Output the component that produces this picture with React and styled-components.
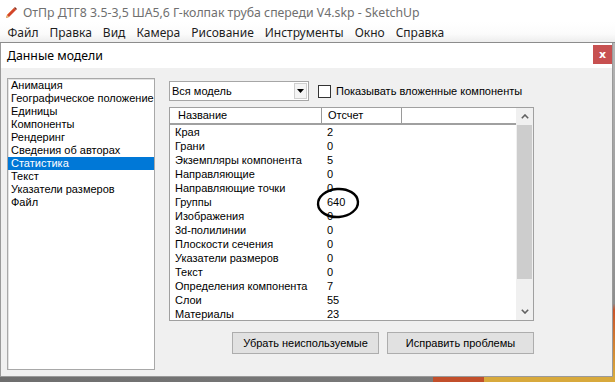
import React from 'react';
import styled, { createGlobalStyle } from 'styled-components';

const GlobalStyle = createGlobalStyle`
  html, body {
    margin: 0;
    padding: 0;
    width: 615px;
    height: 382px;
    overflow: hidden;
    background: #ffffff;
  }
  * { box-sizing: border-box; }
`;

const Page = styled.div`
  width: 615px;
  height: 382px;
  display: flex;
  flex-direction: column;
  overflow: hidden;
`;

const TitleBar = styled.div`
  height: 22px;
  display: flex;
  align-items: center;
  padding: 3px 0 0 4px;
  background: #ffffff;
  font-family: 'Noto Sans', sans-serif;
  font-size: 12.3px;
  color: #6f6f6f;
`;

const TitleText = styled.span`
  margin-left: 5px;
  white-space: nowrap;
`;

const MenuBar = styled.div`
  height: 21px;
  display: flex;
  align-items: center;
  padding: 1px 0 0 2px;
  background: linear-gradient(to bottom, #ffffff 0%, #fbfbfb 60%, #ededed 100%);
  border-bottom: 1px solid #8c8c8c;
  font-family: 'Noto Sans', sans-serif;
  font-size: 12px;
  color: #1e1e1e;
`;

const MenuItem = styled.span`
  padding: 0 5.5px;
  white-space: nowrap;
`;

const Workspace = styled.div`
  flex: 1;
  display: flex;
  min-height: 0;
`;

const Dialog = styled.div`
  width: 613px;
  display: flex;
  flex-direction: column;
  border: 1px solid #9a9a9a;
  border-top: none;
  background: #f0f0f0;
`;

const DialogHeader = styled.div`
  height: 25px;
  display: flex;
  align-items: flex-start;
  justify-content: space-between;
  background: #ffffff;
`;

const DialogTitle = styled.span`
  margin: 4px 0 0 6px;
  font-family: 'Noto Sans', sans-serif;
  font-size: 12.3px;
  color: #000;
`;

const CloseButton = styled.div`
  width: 19px;
  height: 19px;
  margin-top: 2px;
  background: #c75050;
  color: #fff;
  display: flex;
  align-items: center;
  justify-content: center;
  font-family: 'DejaVu Sans', sans-serif;
  font-weight: bold;
  font-size: 11px;
`;

const DialogBody = styled.div`
  flex: 1;
  display: flex;
  align-items: flex-start;
  gap: 14px;
  padding: 10px 0 0 6px;
  font-family: 'Liberation Sans', Arial, sans-serif;
  font-size: 11px;
  color: #000;
`;

const CategoryList = styled.div`
  width: 148px;
  height: 292px;
  background: #fff;
  border: 1px solid #a8a8a8;
  box-shadow: inset 1px 1px 0 #e3e3e3;
  display: flex;
  flex-direction: column;
`;

const CategoryItem = styled.div`
  height: 13px;
  line-height: 13px;
  padding-left: 3px;
  white-space: nowrap;
  background: ${({ selected }) => (selected ? '#0078d7' : 'transparent')};
  color: ${({ selected }) => (selected ? '#fff' : '#000')};
`;

const StatsPane = styled.div`
  width: 365px;
  display: flex;
  flex-direction: column;
  padding-top: 3px;
`;

const Toolbar = styled.div`
  display: flex;
  align-items: center;
  height: 20px;
  gap: 9px;
`;

const Combo = styled.div`
  width: 140px;
  height: 20px;
  display: flex;
  align-items: stretch;
  background: #fff;
  border: 1px solid #a6a6a6;
`;

const ComboValue = styled.span`
  flex: 1;
  padding-left: 2px;
  line-height: 18px;
`;

const ComboArrow = styled.span`
  width: 13px;
  margin: 1px;
  border: 1px solid #cfcfcf;
  background: #f4f4f4;
  display: flex;
  align-items: center;
  justify-content: center;
`;

const CheckLabel = styled.label`
  display: flex;
  align-items: center;
  gap: 5px;
  white-space: nowrap;
`;

const CheckBox = styled.span`
  width: 13px;
  height: 13px;
  background: #fff;
  border: 1px solid #333;
`;

const TableWrap = styled.div`
  position: relative;
  margin-top: 6px;
  width: 365px;
  height: 214px;
  background: #fff;
  border: 1px solid #a0a0a0;
  display: flex;
`;

const TableGrid = styled.div`
  flex: 1;
  display: flex;
  flex-direction: column;
`;

const HeaderRow = styled.div`
  height: 17px;
  display: grid;
  grid-template-columns: 152px 80px 1fr;
  border-bottom: 2px solid #a0a0a0;
`;

const HeaderCell = styled.div`
  padding-left: ${({ pad }) => pad}px;
  line-height: 15px;
  border-right: 1px solid #9a9a9a;
  border-left: 1px solid #fff;
  &:last-child { border-right: none; }
`;

const Row = styled.div`
  height: 14px;
  line-height: 14px;
  display: grid;
  grid-template-columns: 152px 80px 1fr;
  white-space: nowrap;
`;

const Cell = styled.span`
  padding-left: 5px;
`;

const Scrollbar = styled.div`
  width: 17px;
  background: #f0f0f0;
  display: flex;
  flex-direction: column;
  align-items: center;
`;

const ScrollBtn = styled.div`
  height: 17px;
  width: 17px;
  display: flex;
  align-items: center;
  justify-content: center;
`;

const ScrollTrack = styled.div`
  flex: 1;
  width: 15px;
  display: flex;
  flex-direction: column;
`;

const ScrollThumb = styled.div`
  height: 154px;
  background: #cdcdcd;
`;

const Annotation = styled.svg`
  position: absolute;
  left: 145px;
  top: 78px;
`;

const ButtonRow = styled.div`
  display: flex;
  gap: 8px;
  margin-top: 11px;
  padding-left: 63px;
`;

const Button = styled.div`
  width: 148px;
  height: 22px;
  display: flex;
  align-items: center;
  justify-content: center;
  background: #e1e1e1;
  border: 1px solid #adadad;
  white-space: nowrap;
`;

const SceneEdge = styled.div`
  width: 2px;
  background: linear-gradient(to bottom, #b5b5b5 0%, #8d8d8d 78%, #c9542a 80%, #d9ab3b 100%);
`;

const SceneStrip = styled.div`
  height: 5px;
  background: linear-gradient(to right, #6e6e6e 0, #7a7a7a 433px, #c24f2b 433px, #c24f2b 484px, #d8a93c 484px);
`;

const menus = ['Файл', 'Правка', 'Вид', 'Камера', 'Рисование', 'Инструменты', 'Окно', 'Справка'];

const categories = [
  'Анимация',
  'Географическое положение',
  'Единицы',
  'Компоненты',
  'Рендеринг',
  'Сведения об авторах',
  'Статистика',
  'Текст',
  'Указатели размеров',
  'Файл',
];

const stats = [
  ['Края', '2'],
  ['Грани', '0'],
  ['Экземпляры компонента', '5'],
  ['Направляющие', '0'],
  ['Направляющие точки', '0'],
  ['Группы', '640'],
  ['Изображения', '0'],
  ['3d-полилинии', '0'],
  ['Плоскости сечения', '0'],
  ['Указатели размеров', '0'],
  ['Текст', '0'],
  ['Определения компонента', '7'],
  ['Слои', '55'],
  ['Материалы', '23'],
];

const AppIcon = () => (
  <svg width="14" height="14" viewBox="0 0 14 14">
    <path d="M2 12 L3 9 L10 2 L12 4 L5 11 Z" fill="#d2452a" />
    <path d="M10 2 L11 1 L13 3 L12 4 Z" fill="#8a2a18" />
    <path d="M2 12 L3 9 L5 11 Z" fill="#e8c37a" />
    <path d="M3 9 L10 2" stroke="#f08a60" strokeWidth="1" />
  </svg>
);

export default function App() {
  return (
    <Page>
      <GlobalStyle />
      <TitleBar>
        <AppIcon />
        <TitleText>ОтПр ДТГ8 3.5-3,5 ША5,6 Г-колпак труба спереди V4.skp - SketchUp</TitleText>
      </TitleBar>
      <MenuBar>
        {menus.map((m) => (
          <MenuItem key={m}>{m}</MenuItem>
        ))}
      </MenuBar>
      <Workspace>
        <Dialog>
          <DialogHeader>
            <DialogTitle>Данные модели</DialogTitle>
            <CloseButton>x</CloseButton>
          </DialogHeader>
          <DialogBody>
            <CategoryList>
              {categories.map((c) => (
                <CategoryItem key={c} selected={c === 'Статистика'}>
                  {c}
                </CategoryItem>
              ))}
            </CategoryList>
            <StatsPane>
              <Toolbar>
                <Combo>
                  <ComboValue>Вся модель</ComboValue>
                  <ComboArrow>
                    <svg width="7" height="4" viewBox="0 0 7 4">
                      <path d="M0 0 H7 L3.5 4 Z" fill="#000" />
                    </svg>
                  </ComboArrow>
                </Combo>
                <CheckLabel>
                  <CheckBox />
                  Показывать вложенные компоненты
                </CheckLabel>
              </Toolbar>
              <TableWrap>
                <TableGrid>
                  <HeaderRow>
                    <HeaderCell pad={7}>Название</HeaderCell>
                    <HeaderCell pad={5}>Отсчет</HeaderCell>
                    <HeaderCell pad={5} />
                  </HeaderRow>
                  {stats.map(([name, value]) => (
                    <Row key={name}>
                      <Cell>{name}</Cell>
                      <Cell>{value}</Cell>
                      <span />
                    </Row>
                  ))}
                </TableGrid>
                <Scrollbar>
                  <ScrollBtn>
                    <svg width="8" height="5" viewBox="0 0 8 5">
                      <path d="M0.8 4.2 L4 1 L7.2 4.2" stroke="#606060" strokeWidth="1.6" fill="none" />
                    </svg>
                  </ScrollBtn>
                  <ScrollTrack>
                    <ScrollThumb />
                  </ScrollTrack>
                  <ScrollBtn>
                    <svg width="8" height="5" viewBox="0 0 8 5">
                      <path d="M0.8 0.8 L4 4 L7.2 0.8" stroke="#606060" strokeWidth="1.6" fill="none" />
                    </svg>
                  </ScrollBtn>
                </Scrollbar>
                <Annotation width="46" height="34" viewBox="0 0 46 34">
                  <ellipse cx="23" cy="17" rx="20" ry="14" fill="none" stroke="#000" strokeWidth="2.4" transform="rotate(-4 23 17)" />
                </Annotation>
              </TableWrap>
              <ButtonRow>
                <Button>Убрать неиспользуемые</Button>
                <Button>Исправить проблемы</Button>
              </ButtonRow>
            </StatsPane>
          </DialogBody>
        </Dialog>
        <SceneEdge />
      </Workspace>
      <SceneStrip />
    </Page>
  );
}
